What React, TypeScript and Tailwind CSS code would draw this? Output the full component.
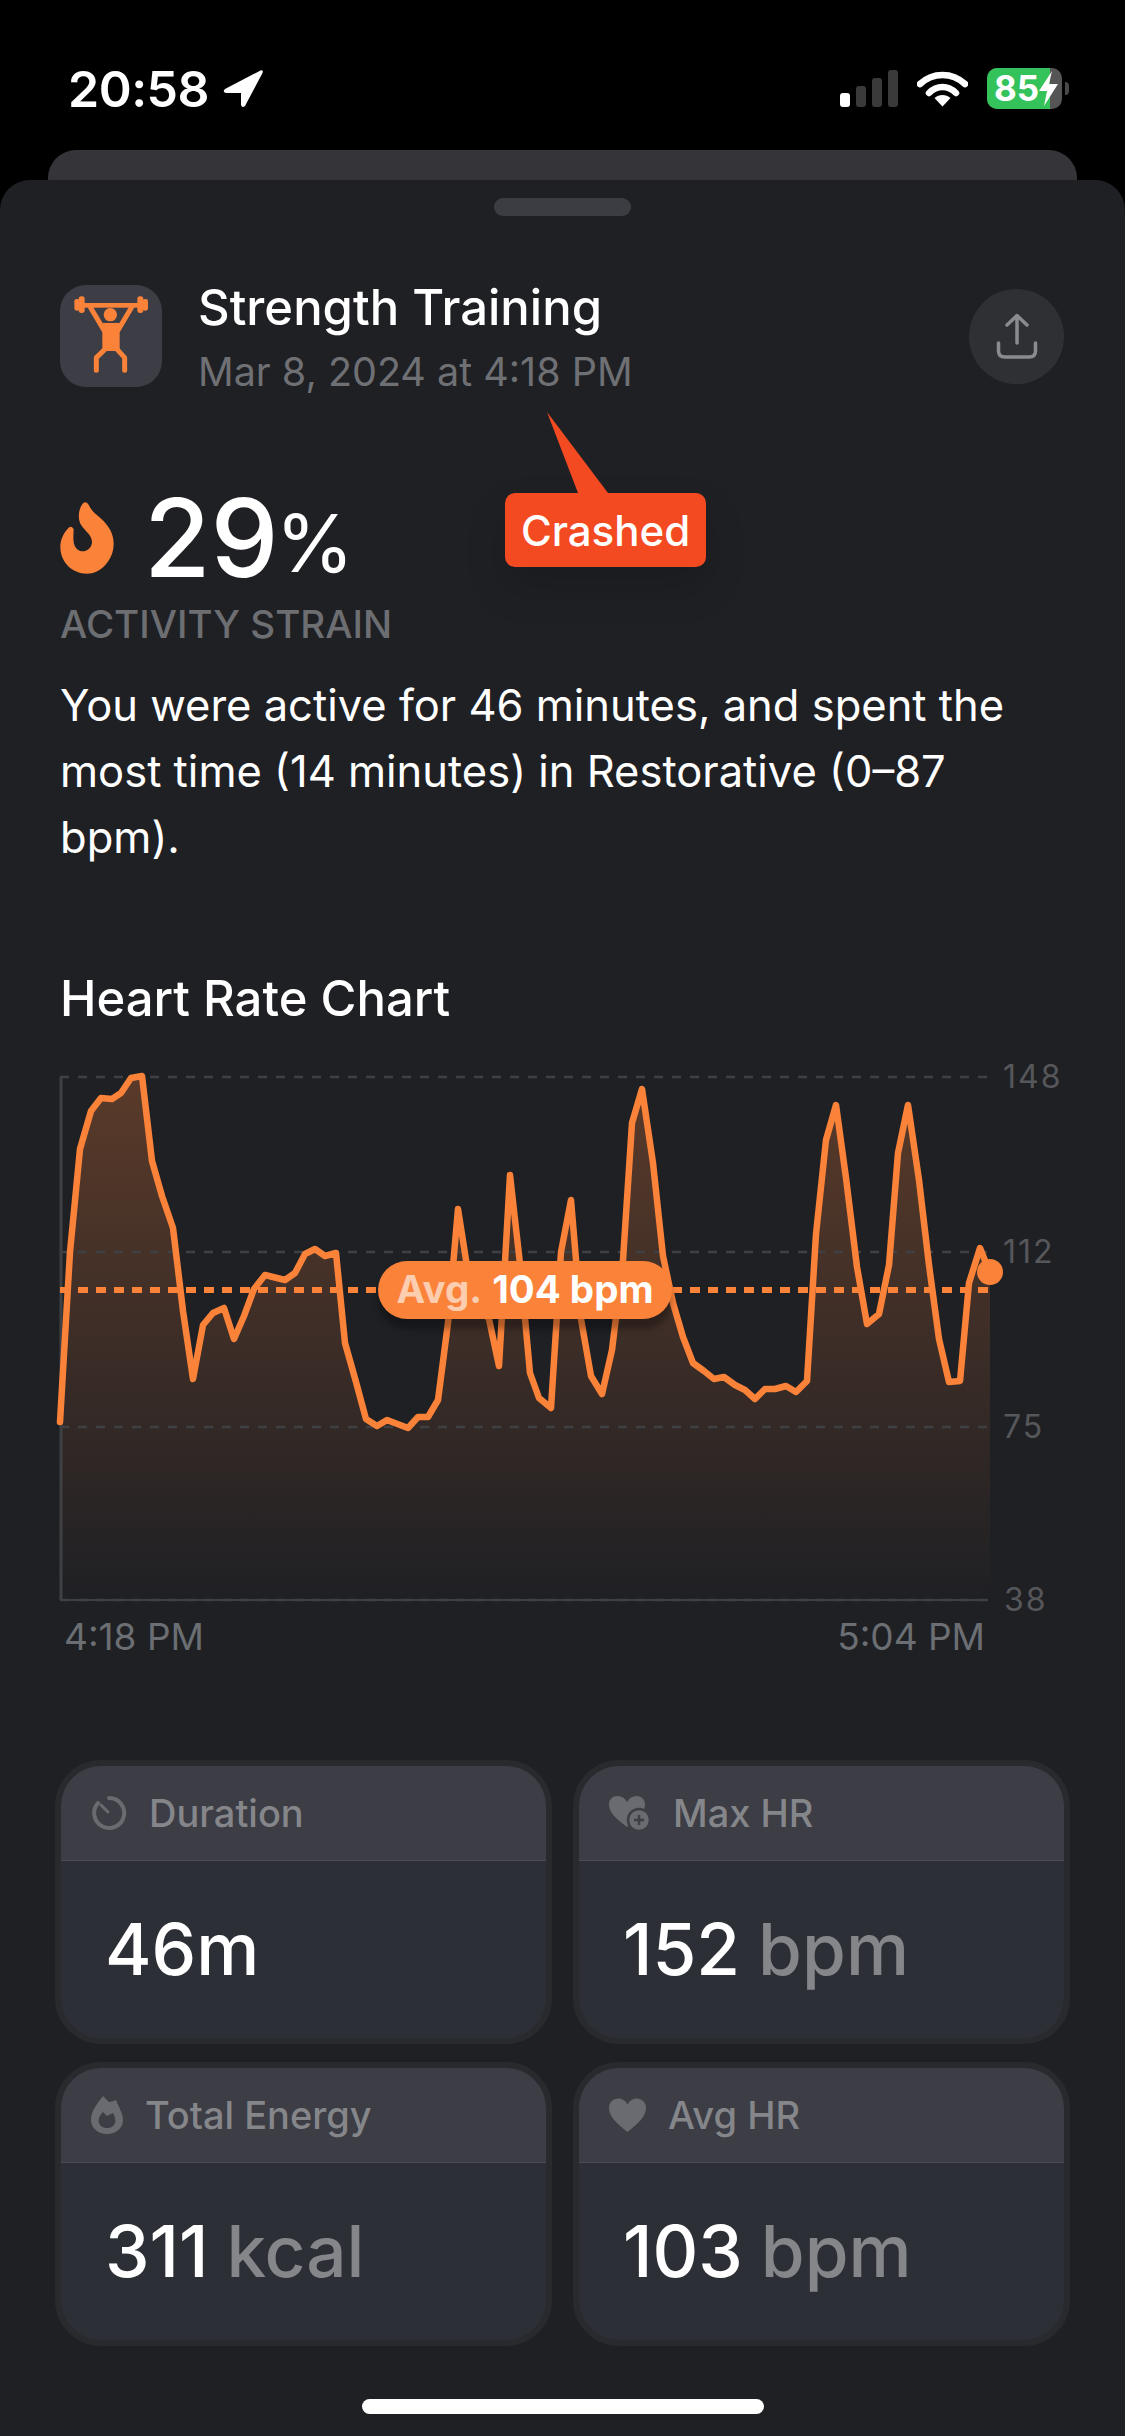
const POINTS: [number, number][] = [
  [60, 1422], [70, 1252], [80, 1149], [91, 1111], [101, 1098], [112, 1099], [121, 1093], [131, 1078], [142, 1076],
  [152, 1161], [162, 1196], [173, 1228], [183, 1311], [193, 1379], [203, 1325], [213, 1313], [224, 1308], [234, 1339],
  [244, 1316], [254, 1289], [265, 1275], [285, 1280], [295, 1273], [305, 1254], [315, 1249], [325, 1256], [336, 1253],
  [345, 1343], [356, 1382], [366, 1419], [377, 1426], [387, 1420], [408, 1428], [418, 1417], [428, 1417], [438, 1400],
  [448, 1323], [458, 1209], [469, 1279], [479, 1307], [489, 1319], [499, 1366], [510, 1175], [520, 1264], [530, 1373],
  [539, 1398], [551, 1408], [561, 1252], [571, 1200], [581, 1319], [591, 1376], [602, 1394], [612, 1350], [623, 1260],
  [632, 1123], [642, 1089], [653, 1163], [663, 1256], [673, 1303], [683, 1337], [693, 1363], [704, 1371], [714, 1379],
  [724, 1377], [735, 1385], [745, 1390], [755, 1399], [765, 1389], [775, 1389], [786, 1386], [796, 1392], [807, 1381],
  [816, 1234], [826, 1140], [836, 1105], [846, 1178], [857, 1267], [867, 1324], [879, 1314], [889, 1265], [898, 1153],
  [908, 1105], [919, 1180], [929, 1265], [939, 1339], [949, 1382], [960, 1381], [969, 1283], [980, 1248], [990, 1273],
]

const LINE = POINTS.map(([x, y]) => `${x},${y}`).join(' ')
const AREA = `60,1600 ${LINE} 990,1600`

const GRID = [
  { y: 1077, label: '148', x: 1003 },
  { y: 1252, label: '112', x: 1003 },
  { y: 1427, label: '75', x: 1003 },
  { y: 1600, label: '38', x: 1004 },
]

function LocationArrow() {
  return (
    <svg width="40" height="38" viewBox="0 0 40 38" className="ml-[14px]">
      <path d="M37.5 0.5 L2 19 Q-1 22 3 23 L18 23 L18 35 Q19 38.5 22 36 L39.5 3 Q40.5 -0.5 37.5 0.5 Z" fill="#fff" />
    </svg>
  )
}

function SignalBars() {
  return (
    <div className="flex items-end gap-[6px] h-[37px]">
      <div className="w-[10px] h-[14px] rounded-[3px] bg-white" />
      <div className="w-[10px] h-[21px] rounded-[3px] bg-[#3a3a3a]" />
      <div className="w-[10px] h-[29px] rounded-[3px] bg-[#3a3a3a]" />
      <div className="w-[10px] h-[37px] rounded-[3px] bg-[#3a3a3a]" />
    </div>
  )
}

function Wifi() {
  return (
    <svg width="51" height="37" viewBox="0 0 51 37">
      <path d="M3 14 C16 2 35 2 48 14" fill="none" stroke="#fff" strokeWidth="6.5" strokeLinecap="round" />
      <path d="M12 23 C20 15 31 15 39 23" fill="none" stroke="#fff" strokeWidth="6.5" strokeLinecap="round" />
      <path d="M17.5 28 C22 24 29 24 33.5 28 L25.5 36.5 Z" fill="#fff" />
    </svg>
  )
}

function Battery() {
  return (
    <div className="flex items-center">
      <div className="relative flex w-[75px] h-[41px] items-center overflow-hidden rounded-[10px] bg-[#555555]">
        <div className="absolute inset-y-0 left-0 w-[63px] bg-[#34c25a]" />
        <span className="relative ml-[7px] text-[35px] leading-none font-bold text-white">85</span>
        <svg width="19" height="35" viewBox="0 0 19 35" className="relative">
          <path d="M13 0 L0 20 L8 20 L5 35 L19 13 L10 13 Z" fill="#fff" />
        </svg>
      </div>
      <div className="ml-[3px] h-[13px] w-[4px] rounded-r-full bg-[#4a4a4a]" />
    </div>
  )
}

function StatusBar() {
  return (
    <div className="flex h-[150px] items-start justify-between pt-[68px] pl-[68px] pr-[56px]">
      <div className="flex items-center">
        <span className="text-[50px] leading-[42px] font-semibold tracking-[-0.5px] text-white">20:58</span>
        <LocationArrow />
      </div>
      <div className="flex items-center gap-[19px]">
        <SignalBars />
        <Wifi />
        <Battery />
      </div>
    </div>
  )
}

function Lifter() {
  return (
    <svg width="102" height="102" viewBox="92 78 306 306">
      <g fill="#fb8239">
        <rect x="135" y="120" width="16" height="35" rx="7" />
        <rect x="148" y="112" width="18" height="50" rx="8" />
        <rect x="324" y="112" width="18" height="50" rx="8" />
        <rect x="340" y="120" width="16" height="35" rx="7" />
        <rect x="160" y="132" width="170" height="14" />
        <circle cx="243" cy="167" r="20" />
        <rect x="219" y="192" width="52" height="84" rx="4" />
      </g>
      <path
        d="M184 146 L224 214 M306 146 L266 214 M226 272 L201 296 L201 334 M264 272 L286 296 L286 334"
        fill="none"
        stroke="#fb8239"
        strokeWidth="15"
        strokeLinecap="round"
        strokeLinejoin="round"
      />
    </svg>
  )
}

function ShareIcon() {
  return (
    <svg width="42" height="46" viewBox="0 0 42 46" fill="none" stroke="#8a8b8e" strokeWidth="3.5" strokeLinecap="round" strokeLinejoin="round">
      <path d="M21 30 L21 2.5 M11 12 L21 2.5 L31 12" />
      <path d="M2.5 30 L2.5 38 Q2.5 44 9 44 L33 44 Q39.5 44 39.5 38 L39.5 30" />
    </svg>
  )
}

function Flame() {
  return (
    <svg width="54" height="72" viewBox="30 30 160 216">
      <path
        d="M100 32 Q108 28 115 38 C122 55 135 65 150 78 C175 100 190 125 190 155 C190 205 150 245 110 245 C65 245 30 210 30 165 C30 140 42 120 55 107 Q65 100 70 112 C70 125 68 135 70 150 C72 168 85 178 97 178 C112 178 125 165 125 150 C125 130 105 118 93 100 C82 85 82 50 100 32 Z"
        fill="#fb8239"
      />
    </svg>
  )
}

function SheetHeader() {
  return (
    <div className="mt-[63px] flex items-center justify-between pl-[60px] pr-[61px]">
      <div className="flex items-center gap-[36px]">
        <div className="flex h-[102px] w-[102px] items-center justify-center rounded-[26px] bg-[#3c3d45]">
          <Lifter />
        </div>
        <div className="flex flex-col">
          <span className="text-[49px] leading-[58px] font-medium text-white">Strength Training</span>
          <span className="mt-[14px] text-[39.5px] leading-[42px] text-[#6f7074]">Mar 8, 2024 at 4:18 PM</span>
        </div>
      </div>
      <div className="flex h-[95px] w-[95px] items-center justify-center rounded-full bg-[#2f3034]">
        <ShareIcon />
      </div>
    </div>
  )
}

function CrashedNote() {
  return (
    <div className="absolute left-[505px] top-[232px] w-[201px]">
      <svg width="70" height="81" viewBox="0 0 70 81" className="block ml-[37px]">
        <path d="M5 0 L66 81 L36 81 Z" fill="#f44a22" />
      </svg>
      <div className="flex h-[74px] items-center justify-center rounded-[10px] bg-[#f44a22] text-[42px] font-medium text-white shadow-[0_20px_40px_rgba(0,0,0,0.15)]">
        Crashed
      </div>
    </div>
  )
}

function Strain() {
  return (
    <div className="mt-[96px] px-[60px]">
      <div className="flex h-[98px] items-center">
        <Flame />
        <span className="ml-[30px] text-[108px] leading-none font-medium text-white">29</span>
        <span className="-ml-[3px] mt-[9px] text-[80px] leading-none text-white">%</span>
      </div>
      <div className="mt-[15px] text-[38.5px] leading-[44px] font-medium text-[#6d6e72]">ACTIVITY STRAIN</div>
      <p className="mt-[26px] w-[1000px] text-[43.5px] leading-[66px] text-white">
        You were active for 46 minutes, and spent the most time (14 minutes) in Restorative (0–87 bpm).
      </p>
    </div>
  )
}

function HeartRateChart() {
  return (
    <div className="relative mt-[101px]">
      <h2 className="px-[60px] text-[49px] leading-[56px] font-medium text-white">Heart Rate Chart</h2>
      <svg width="1125" height="570" viewBox="0 1060 1125 570" className="mt-[33px] block">
        <defs>
          <linearGradient id="hr-area" gradientUnits="userSpaceOnUse" x1="0" y1="1077" x2="0" y2="1600">
            <stop offset="0" stopColor="#fb8239" stopOpacity="0.27" />
            <stop offset="1" stopColor="#fb8239" stopOpacity="0" />
          </linearGradient>
        </defs>
        <polygon points={AREA} fill="url(#hr-area)" />
        <line x1="61" y1="1077" x2="61" y2="1600" stroke="#3f4044" strokeWidth="3" />
        {GRID.map(g => (
          <g key={g.label}>
            <line x1="60" y1={g.y} x2="988" y2={g.y} stroke="#3f4044" strokeWidth="2.5" strokeDasharray="9 9" />
            <text x={g.x} y={g.y + 11} fontSize="32" letterSpacing="2" fill="#56575b">{g.label}</text>
          </g>
        ))}
        <line x1="60" y1="1600" x2="988" y2="1600" stroke="#3f4044" strokeWidth="2" />
        <line x1="60" y1="1290" x2="990" y2="1290" stroke="#fb8239" strokeWidth="6" strokeDasharray="10 8" />
        <polyline points={LINE} fill="none" stroke="#fb8239" strokeWidth="6.5" strokeLinejoin="round" strokeLinecap="round" />
        <circle cx="990" cy="1272" r="13" fill="#fb8239" />
      </svg>
      <div className="absolute left-[378px] top-[290px] flex h-[58px] w-[294px] items-center justify-center rounded-full bg-[#fb8239] text-[38.5px] font-bold text-white shadow-[0_10px_6px_rgba(0,0,0,0.3)]">
        <span className="opacity-60">Avg.</span>
        <span className="ml-[10px]">104 bpm</span>
      </div>
      <div className="-mt-[13px] flex justify-between pl-[64px] pr-[140px] text-[37px] leading-[40px] text-[#6b6e72]">
        <span>4:18 PM</span>
        <span>5:04 PM</span>
      </div>
    </div>
  )
}

function TimerIcon() {
  return (
    <svg width="36" height="36" viewBox="0 0 36 36" fill="none" stroke="#6a6b70" strokeWidth="4" strokeLinecap="round">
      <path d="M18 3 A15 15 0 1 1 7 8" />
      <path d="M10 10 L17 17" strokeWidth="3" />
    </svg>
  )
}

function HeartPlusIcon() {
  return (
    <svg width="42" height="36" viewBox="0 0 42 36">
      <path d="M18 32 C6 23 0 17 0 9.5 C0 4 4 1 8.5 1 C12.5 1 16 3 18 7 C20 3 23.5 1 27.5 1 C32 1 36 4 36 9.5 C36 17 30 23 18 32 Z" fill="#6a6b70" />
      <circle cx="30" cy="25" r="11" fill="#6a6b70" stroke="#3c3d45" strokeWidth="2.5" />
      <path d="M30 20 V30 M25 25 H35" stroke="#3c3d45" strokeWidth="2.5" />
    </svg>
  )
}

function EnergyIcon() {
  return (
    <svg width="32" height="38" viewBox="0 0 32 38">
      <path
        fillRule="evenodd"
        d="M12 0 L18 6 Q19 6 25 4 C28 12 32 17 32 24 C32 32 25 38 16 38 C7 38 0 32 0 24 C0 15 6 8 12 0 Z M12 16 L16 20 L22 17 C24 21 25 24 24 27 C23 30 20 32 16 32 C12 32 9 30 8 27 C7 23 9 19 12 16 Z"
        fill="#6a6b70"
      />
    </svg>
  )
}

function HeartIcon() {
  return (
    <svg width="37" height="34" viewBox="0 0 37 34">
      <path d="M18.5 34 C7 25 0 18 0 10 C0 4 4.5 0.5 9.5 0.5 C13.5 0.5 16.5 3 18.5 6.5 C20.5 3 23.5 0.5 27.5 0.5 C32.5 0.5 37 4 37 10 C37 18 30 25 18.5 34 Z" fill="#6a6b70" />
    </svg>
  )
}

const METRICS = [
  { label: 'Duration', value: '46m', unit: '', icon: <TimerIcon /> },
  { label: 'Max HR', value: '152', unit: 'bpm', icon: <HeartPlusIcon /> },
  { label: 'Total Energy', value: '311', unit: 'kcal', icon: <EnergyIcon /> },
  { label: 'Avg HR', value: '103', unit: 'bpm', icon: <HeartIcon /> },
]

function MetricCards() {
  return (
    <div className="mt-[103px] grid grid-cols-2 gap-x-[21px] gap-y-[18px] px-[55px]">
      {METRICS.map(m => (
        <div key={m.label} className="h-[284px] overflow-hidden rounded-[46px] border-[6px] border-[#292a2e] bg-[#2d2f36]">
          <div className="flex h-[95px] items-center gap-[22px] border-b-[1.5px] border-[#4c4d54] bg-[#3c3d45] pl-[30px]">
            {m.icon}
            <span className="text-[38px] font-medium text-[#85868a]">{m.label}</span>
          </div>
          <div className="flex h-[177px] items-center pl-[44px] text-[71px] font-medium text-white">
            <span>{m.value}</span>
            {m.unit && <span className="ml-[18px] text-[#85868a]">{m.unit}</span>}
          </div>
        </div>
      ))}
    </div>
  )
}

export default function App() {
  return (
    <div className="flex h-[2436px] w-[1125px] flex-col overflow-hidden bg-black font-[Inter,sans-serif]">
      <StatusBar />
      <div className="mx-[48px] h-[30px] shrink-0 rounded-t-[28px] bg-[#343439]" />
      <div className="relative flex flex-1 flex-col rounded-t-[30px] bg-[#1f2024]">
        <div className="mx-auto mt-[18px] h-[18px] w-[137px] rounded-[9px] bg-[#3c3d43]" />
        <SheetHeader />
        <CrashedNote />
        <Strain />
        <HeartRateChart />
        <MetricCards />
        <div className="mx-auto mt-[53px] h-[15px] w-[402px] rounded-full bg-white" />
      </div>
    </div>
  )
}
